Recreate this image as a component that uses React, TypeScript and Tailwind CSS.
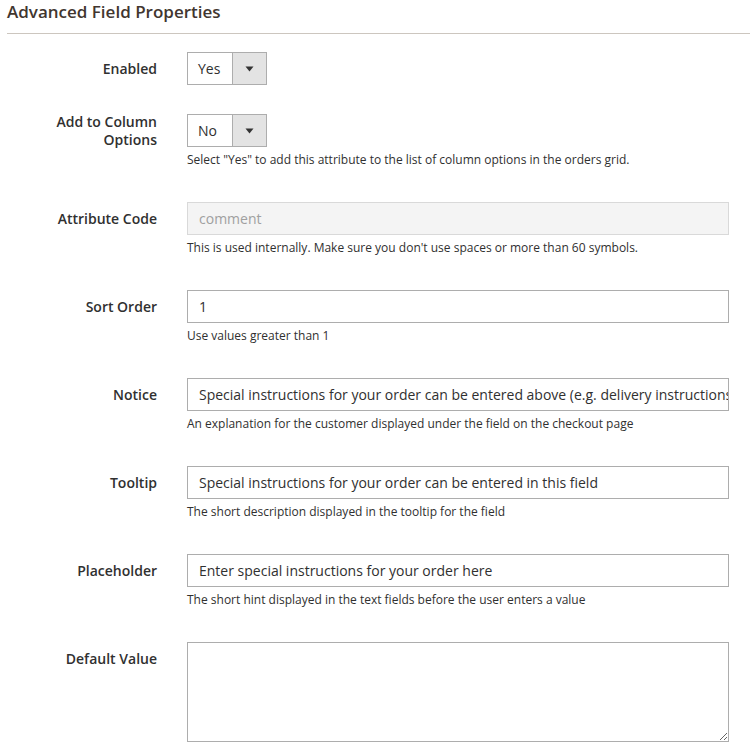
import React from 'react';

const font = { fontFamily: '"Open Sans", "Noto Sans", sans-serif' };

interface RowProps {
  label: string;
  note?: string;
  children: React.ReactNode;
}

const Row: React.FC<RowProps> = ({ label, note, children }) => (
  <div className="flex">
    <div className="w-[150px] h-[33px] flex items-center justify-end text-right text-[14px] leading-[18px] font-semibold text-[#303030]">
      {label}
    </div>
    <div className="ml-[30px] w-[542px]">
      {children}
      {note && (
        <div className="pt-[4px] h-[26px] text-[12px] leading-[18px] text-[#303030]">{note}</div>
      )}
    </div>
  </div>
);

const Select: React.FC<{ value: string }> = ({ value }) => (
  <div className="flex w-[80px] h-[33px] border border-[#adadad] bg-white">
    <div className="flex-1 flex items-center pl-[10px] text-[14px] text-[#303030]">{value}</div>
    <div className="w-[34px] flex items-center justify-center bg-[#e3e3e3] border-l border-[#adadad]">
      <svg width="9" height="6" viewBox="0 0 9 6">
        <path d="M0.5 0.5 L8.5 0.5 L4.5 5.5 Z" fill="#333" />
      </svg>
    </div>
  </div>
);

const TextInput: React.FC<{ value: string; disabled?: boolean }> = ({ value, disabled }) => (
  <div
    className={
      disabled
        ? 'h-[33px] flex items-center px-[11px] border border-[#d9d9d9] bg-[#f4f4f4] text-[14px] text-[#a0a0a0] whitespace-nowrap overflow-hidden'
        : 'h-[33px] flex items-center px-[11px] border border-[#adadad] bg-white text-[14px] text-[#303030] whitespace-nowrap overflow-hidden'
    }
  >
    {value}
  </div>
);

export default function App() {
  return (
    <div className="bg-white w-[750px] h-[750px] overflow-hidden pl-[7px]" style={font}>
      <div className="h-[34px] border-b border-[#ccc6bf] text-[17px] leading-[23px] font-semibold text-[#41362f]">
        Advanced Field Properties
      </div>
      <div className="mt-[18px] flex flex-col gap-[29px]">
        <Row label="Enabled">
          <Select value="Yes" />
        </Row>
        <Row
          label="Add to Column Options"
          note={'Select "Yes" to add this attribute to the list of column options in the orders grid.'}
        >
          <Select value="No" />
        </Row>
        <Row
          label="Attribute Code"
          note="This is used internally. Make sure you don't use spaces or more than 60 symbols."
        >
          <TextInput value="comment" disabled />
        </Row>
        <Row label="Sort Order" note="Use values greater than 1">
          <TextInput value="1" />
        </Row>
        <Row
          label="Notice"
          note="An explanation for the customer displayed under the field on the checkout page"
        >
          <TextInput value="Special instructions for your order can be entered above (e.g. delivery instructions)" />
        </Row>
        <Row label="Tooltip" note="The short description displayed in the tooltip for the field">
          <TextInput value="Special instructions for your order can be entered in this field" />
        </Row>
        <Row
          label="Placeholder"
          note="The short hint displayed in the text fields before the user enters a value"
        >
          <TextInput value="Enter special instructions for your order here" />
        </Row>
        <Row label="Default Value">
          <textarea
            className="block w-[542px] h-[100px] border border-[#adadad] bg-white outline-none"
            defaultValue=""
          />
        </Row>
      </div>
    </div>
  );
}
